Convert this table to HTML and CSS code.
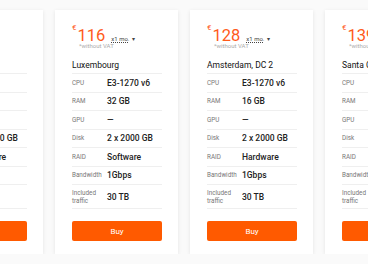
FILE: index.html
```html
<!DOCTYPE html>
<html>
<head>
<meta charset="utf-8">
<link rel="stylesheet" href="styles.css">
</head>
<body>
<div class="track">
  <div class="card">
    <div class="price"><span class="cur">€</span><span class="num">99</span><span class="per">x1 mo.</span><span class="caret">▾</span></div>
    <div class="vat">*without VAT</div>
    <div class="title">Frankfurt</div>
    <div class="specs">
      <div class="row"><span class="lbl">CPU</span><span class="val">G4560</span></div>
      <div class="row"><span class="lbl">RAM</span><span class="val">32 GB</span></div>
      <div class="row"><span class="lbl">GPU</span><span class="val">—</span></div>
      <div class="row"><span class="lbl">Disk</span><span class="val">2 x 2000 GB</span></div>
      <div class="row"><span class="lbl">RAID</span><span class="val">Software</span></div>
      <div class="row"><span class="lbl">Bandwidth</span><span class="val">1Gbps</span></div>
      <div class="row tall"><span class="lbl">Included traffic</span><span class="val">30 TB</span></div>
    </div>
    <button class="buy">Buy</button>
  </div>
  <div class="card">
    <div class="price"><span class="cur">€</span><span class="num">116</span><span class="per">x1 mo.</span><span class="caret">▾</span></div>
    <div class="vat">*without VAT</div>
    <div class="title">Luxembourg</div>
    <div class="specs">
      <div class="row"><span class="lbl">CPU</span><span class="val">E3-1270 v6</span></div>
      <div class="row"><span class="lbl">RAM</span><span class="val">32 GB</span></div>
      <div class="row"><span class="lbl">GPU</span><span class="val">—</span></div>
      <div class="row"><span class="lbl">Disk</span><span class="val">2 x 2000 GB</span></div>
      <div class="row"><span class="lbl">RAID</span><span class="val">Software</span></div>
      <div class="row"><span class="lbl">Bandwidth</span><span class="val">1Gbps</span></div>
      <div class="row tall"><span class="lbl">Included traffic</span><span class="val">30 TB</span></div>
    </div>
    <button class="buy">Buy</button>
  </div>
  <div class="card">
    <div class="price"><span class="cur">€</span><span class="num">128</span><span class="per">x1 mo.</span><span class="caret">▾</span></div>
    <div class="vat">*without VAT</div>
    <div class="title">Amsterdam, DC 2</div>
    <div class="specs">
      <div class="row"><span class="lbl">CPU</span><span class="val">E3-1270 v6</span></div>
      <div class="row"><span class="lbl">RAM</span><span class="val">16 GB</span></div>
      <div class="row"><span class="lbl">GPU</span><span class="val">—</span></div>
      <div class="row"><span class="lbl">Disk</span><span class="val">2 x 2000 GB</span></div>
      <div class="row"><span class="lbl">RAID</span><span class="val">Hardware</span></div>
      <div class="row"><span class="lbl">Bandwidth</span><span class="val">1Gbps</span></div>
      <div class="row tall"><span class="lbl">Included traffic</span><span class="val">30 TB</span></div>
    </div>
    <button class="buy">Buy</button>
  </div>
  <div class="card">
    <div class="price"><span class="cur">€</span><span class="num">139</span><span class="per">x1 mo.</span><span class="caret">▾</span></div>
    <div class="vat">*without VAT</div>
    <div class="title">Santa Clara</div>
    <div class="specs">
      <div class="row"><span class="lbl">CPU</span><span class="val">E3-1270 v6</span></div>
      <div class="row"><span class="lbl">RAM</span><span class="val">32 GB</span></div>
      <div class="row"><span class="lbl">GPU</span><span class="val">—</span></div>
      <div class="row"><span class="lbl">Disk</span><span class="val">2 x 2000 GB</span></div>
      <div class="row"><span class="lbl">RAID</span><span class="val">Hardware</span></div>
      <div class="row"><span class="lbl">Bandwidth</span><span class="val">1Gbps</span></div>
      <div class="row tall"><span class="lbl">Included traffic</span><span class="val">30 TB</span></div>
    </div>
    <button class="buy">Buy</button>
  </div>
</div>
</body>
</html>
```

FILE: styles.css
```css
html, body {
  margin: 0;
  padding: 0;
  background: #fafafa;
  overflow: hidden;
  font-family: Roboto, "Liberation Sans", sans-serif;
}
.track {
  display: flex;
  gap: 12px;
  padding-top: 10px;
  margin-left: -80px;
  width: 600px;
}
.card {
  flex: 0 0 123px;
  box-sizing: border-box;
  width: 123px;
  background: #fff;
  padding: 17px 16px 13px 17px;
  box-shadow: 0 1px 4px rgba(0, 0, 0, 0.09);
}
.price {
  display: flex;
  align-items: baseline;
  height: 17px;
  color: #ff5a1a;
}
.cur {
  align-self: flex-start;
  font-size: 8px;
  line-height: 8px;
  margin-top: -3px;
  margin-right: 1px;
}
.num {
  font-size: 16.5px;
  line-height: 17px;
  font-weight: 400;
}
.per {
  font-size: 6px;
  color: #444;
  margin-left: 6px;
  text-decoration: underline dotted;
  text-underline-offset: 1px;
}
.caret {
  font-size: 6px;
  color: #444;
  margin-left: 3px;
}
.vat {
  font-size: 6px;
  line-height: 8px;
  color: #aaa;
  padding-left: 7px;
  margin-top: -1.6px;
}
.title {
  font-size: 8.5px;
  line-height: 10px;
  color: #111;
  margin-top: 9.6px;
  margin-bottom: 3px;
  white-space: nowrap;
}
.specs {
  border-top: 1px solid #efefef;
}
.row {
  display: flex;
  align-items: center;
  height: 17.5px;
  border-bottom: 1px solid #efefef;
}
.row.tall {
  height: 23px;
}
.lbl {
  flex: 0 0 35px;
  width: 35px;
  font-size: 6.3px;
  line-height: 8px;
  color: #777;
}
.val {
  font-size: 8.5px;
  font-weight: 500;
  color: #222;
  white-space: nowrap;
}
.buy {
  display: block;
  width: 100%;
  height: 20px;
  margin-top: 12px;
  border: none;
  border-radius: 2px;
  background: #ff5a00;
  color: #fff;
  font-family: Roboto, "Liberation Sans", sans-serif;
  font-size: 8px;
  padding: 0;
}
```
